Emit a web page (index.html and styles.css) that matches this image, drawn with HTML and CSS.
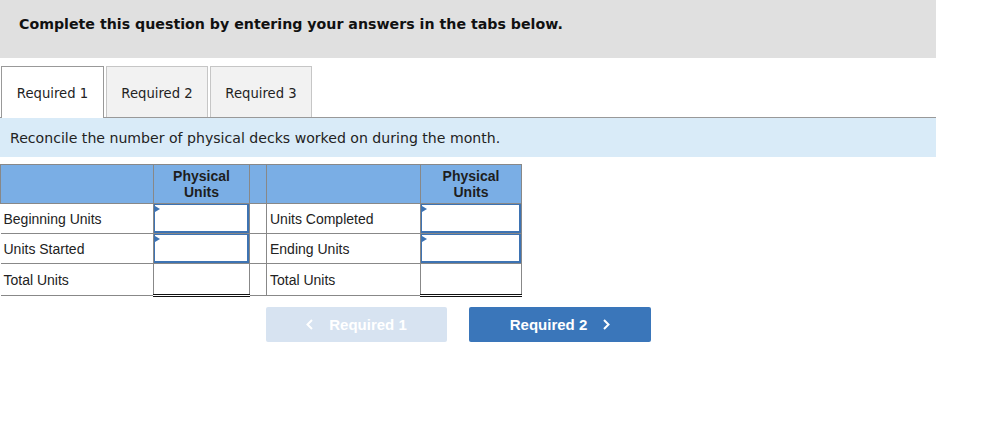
FILE: index.html
```html
<!DOCTYPE html>
<html>
<head>
<meta charset="utf-8">
<link rel="stylesheet" href="styles.css">
</head>
<body>
<div class="page">
  <div class="banner">Complete this question by entering your answers in the tabs below.</div>
  <div class="tabs">
    <div class="tab active">Required 1</div>
    <div class="tab">Required 2</div>
    <div class="tab">Required 3</div>
  </div>
  <div class="instr">Reconcile the number of physical decks worked on during the month.</div>
  <table class="grid">
    <colgroup>
      <col class="c-label"><col class="c-val"><col class="c-gap"><col class="c-label2"><col class="c-val2">
    </colgroup>
    <thead>
      <tr>
        <th></th><th>Physical<br>Units</th><th></th><th></th><th>Physical<br>Units</th>
      </tr>
    </thead>
    <tbody>
      <tr>
        <td class="lbl">Beginning Units</td><td class="inp"><span class="box"></span></td><td class="gap"></td>
        <td class="lbl">Units Completed</td><td class="inp"><span class="box"></span></td>
      </tr>
      <tr>
        <td class="lbl">Units Started</td><td class="inp"><span class="box"></span></td><td class="gap"></td>
        <td class="lbl">Ending Units</td><td class="inp"><span class="box"></span></td>
      </tr>
      <tr class="total">
        <td class="lbl">Total Units</td><td class="tot"></td><td class="gap"></td>
        <td class="lbl">Total Units</td><td class="tot"></td>
      </tr>
    </tbody>
  </table>
  <div class="nav">
    <div class="btn prev"><svg class="chev left" width="7" height="11" viewBox="0 0 7 11"><polyline points="6,1 1.5,5.5 6,10" fill="none" stroke="#fff" stroke-width="2"/></svg>Required 1</div>
    <div class="btn next">Required 2<svg class="chev right" width="7" height="11" viewBox="0 0 7 11"><polyline points="1,1 5.5,5.5 1,10" fill="none" stroke="#fff" stroke-width="2"/></svg></div>
  </div>
</div>
</body>
</html>
```
FILE: styles.css
```css
html, body { margin: 0; padding: 0; background: #fff; }
.page { width: 936px; }
.banner {
  background: #e0e0e0;
  height: 58px;
  box-sizing: border-box;
  padding: 15px 0 0 19px;
  font: bold 14.2px "DejaVu Sans", Verdana, sans-serif;
  color: #111;
  line-height: 18px;
}
.tabs {
  display: flex;
  margin-top: 8px;
  padding-left: 1px;
  border-bottom: 1px solid #999;
  height: 51px;
}
.tab {
  box-sizing: border-box;
  height: 51px;
  width: 102px;
  margin-right: 2px;
  padding-top: 2px;
  border: 1px solid #c6c6c6;
  border-bottom: none;
  background: #f2f2f2;
  font: 13.2px "DejaVu Sans", Verdana, sans-serif;
  color: #222;
  display: flex;
  align-items: center;
  justify-content: center;
}
.tab.active {
  background: #fff;
  border-color: #999;
  height: 52px;
  margin-bottom: -1px;
  width: 103px;
}
.instr {
  background: #d9ebf8;
  height: 39px;
  box-sizing: border-box;
  padding: 12px 0 0 10px;
  font: 14.1px "DejaVu Sans", Verdana, sans-serif;
  color: #222;
  line-height: 17px;
}
.grid {
  margin-top: 7px;
  border-collapse: collapse;
  font: 14px "Liberation Sans", Arial, sans-serif;
  color: #222;
}
.c-label { width: 153px; }
.c-val { width: 96px; }
.c-gap { width: 17px; }
.c-label2 { width: 154px; }
.c-val2 { width: 101px; }
.grid th {
  background: #7aaee5;
  border: 1px solid #888;
  height: 38px;
  padding: 0;
  font: bold 14px "Liberation Sans", Arial, sans-serif;
  color: #1e1e1e;
  line-height: 16px;
  vertical-align: middle;
}
.grid td {
  border: 1px solid #888;
  border-left: none;
  border-right: none;
  height: 29px;
  padding: 0;
  vertical-align: middle;
}
.grid td.lbl { padding-left: 3px; }
.grid tr td:first-child { border-left: none; }
.grid td.inp, .grid td.tot, .grid td.gap { border-left: 1px solid #888; border-right: 1px solid #888; }
.grid td.inp { padding: 0; }
.box {
  display: block;
  position: relative;
  box-sizing: border-box;
  height: 29px;
  border: 2px solid #3d73b3;
  border-top-width: 1px;
  border-left-width: 1px;
  background: #fff;
}
.box::before {
  content: "";
  position: absolute;
  left: 0;
  top: 1px;
  border-left: 5px solid #3d73b3;
  border-top: 3px solid transparent;
  border-bottom: 3px solid transparent;
}
.grid tr.total td { height: 30px; border-bottom: 1px solid #888; }
.grid tr.total td.tot { border-bottom: 3px double #111; border-top: 1px solid #111; }
.nav {
  display: flex;
  margin: 10px 0 0 266px;
  gap: 22px;
}
.btn {
  width: 181px;
  height: 35px;
  border-radius: 2px;
  display: flex;
  align-items: center;
  justify-content: center;
  font: bold 15px "Liberation Sans", Arial, sans-serif;
  color: #fff;
}
.btn.prev { background: #d7e3f1; }
.btn.next { background: #3a76ba; width: 182px; }
.chev { display: block; }
.chev.left { margin-right: 16px; }
.chev.right { margin-left: 16px; }
```
